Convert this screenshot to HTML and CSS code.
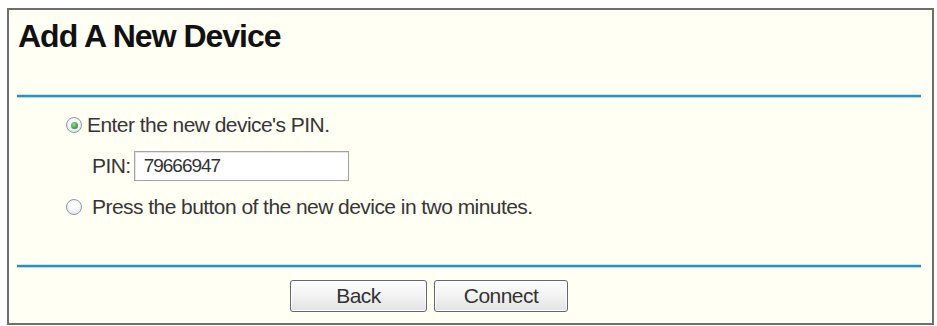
FILE: index.html
```html
<!DOCTYPE html>
<html>
<head>
<meta charset="utf-8">
<link rel="stylesheet" href="styles.css">
</head>
<body>
<div class="panel">
  <h1 class="title">Add A New Device</h1>
  <div class="rule rule-top"></div>
  <div class="options">
    <div class="row row-radio">
      <span class="radio checked"></span>
      <span class="label">Enter the new device's PIN.</span>
    </div>
    <div class="row row-pin">
      <span class="pin-label">PIN:</span>
      <span class="pin-input">79666947</span>
    </div>
    <div class="row row-radio">
      <span class="radio"></span>
      <span class="label label-wide">Press the button of the new device in two minutes.</span>
    </div>
  </div>
  <div class="rule rule-bottom"></div>
  <div class="buttons">
    <span class="btn btn-back">Back</span>
    <span class="btn btn-connect">Connect</span>
  </div>
</div>
</body>
</html>
```
FILE: styles.css
```css
html, body {
  margin: 0;
  padding: 0;
  background: #ffffff;
}
body {
  font-family: "Liberation Sans", Arial, sans-serif;
  color: #363636;
}
.panel {
  box-sizing: border-box;
  margin: 8px 0 0 7px;
  width: 927px;
  height: 317px;
  border: 2px solid #6e6e6e;
  background: #fffff4;
  display: flex;
  flex-direction: column;
}
.title {
  margin: 11px 0 0 9px;
  font-size: 32px;
  letter-spacing: -1px;
  line-height: 31px;
  font-weight: bold;
  color: #111111;
}
.rule {
  height: 4px;
  margin-left: 8px;
  margin-right: 11px;
  background: linear-gradient(#b6ecf8 0, #b6ecf8 25%, #3a8db2 25%, #3a8db2 75%, #a4e0f0 75%, #a4e0f0 100%);
}
.rule-top {
  margin-top: 42px;
}
.options {
  margin-top: 17px;
  display: flex;
  flex-direction: column;
  gap: 16px;
  padding-left: 57px;
  font-size: 21px;
  letter-spacing: -0.55px;
}
.row {
  display: flex;
  align-items: center;
}
.row-radio {
  height: 20px;
  line-height: 20px;
}
.radio {
  box-sizing: border-box;
  width: 16px;
  height: 16px;
  border-radius: 50%;
  border: 1px solid #8d99a6;
  background: radial-gradient(circle at 50% 35%, #ffffff 0, #f2f4f6 55%, #d5dbe0 100%);
  display: flex;
  align-items: center;
  justify-content: center;
  flex: none;
}
.radio.checked::after {
  content: "";
  width: 7px;
  height: 7px;
  border-radius: 50%;
  background: radial-gradient(circle at 40% 35%, #8fe08f 0, #3fa34a 60%, #2a7d34 100%);
}
.label {
  margin-left: 5px;
}
.label-wide {
  margin-left: 10px;
}
.row-pin {
  padding-left: 26px;
  height: 30px;
}
.pin-label {
  line-height: 20px;
}
.pin-input {
  box-sizing: border-box;
  margin-left: 3px;
  width: 215px;
  height: 30px;
  border: 1px solid #a3a3a3;
  box-shadow: inset 1px 1px 0 #e4e4e4;
  background: #ffffff;
  padding-left: 9px;
  font-size: 19px;
  letter-spacing: -1px;
  line-height: 28px;
  color: #333333;
}
.rule-bottom {
  margin-top: 47px;
}
.buttons {
  margin-top: 12px;
  padding-left: 281px;
  display: flex;
  gap: 7px;
}
.btn {
  box-sizing: border-box;
  height: 32px;
  border: 1px solid #5f6870;
  border-radius: 3px;
  background: linear-gradient(#fdfdfd 0, #f2f2f2 50%, #e3e3e3 100%);
  box-shadow: inset 0 0 0 1px #ffffff;
  font-size: 21px;
  letter-spacing: -0.55px;
  line-height: 30px;
  text-align: center;
  color: #333333;
}
.btn-back {
  width: 137px;
}
.btn-connect {
  width: 134px;
}
```
